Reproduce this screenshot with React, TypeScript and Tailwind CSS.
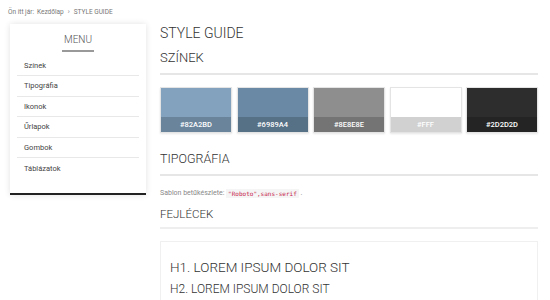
import React from "react";

const swatches = [
  { c: "#82A2BD", t: "#82A2BD" },
  { c: "#6989A4", t: "#6989A4" },
  { c: "#8E8E8E", t: "#8E8E8E" },
  { c: "#FFFFFF", t: "#FFF" },
  { c: "#2D2D2D", t: "#2D2D2D" },
];

const menu = ["Színek", "Tipográfia", "Ikonok", "Űrlapok", "Gombok", "Táblázatok"];

export default function App() {
  return (
    <div className="w-[550px] h-[300px] overflow-hidden bg-white text-[#555] font-['Roboto',sans-serif]">
      <div className="pl-[8px] pt-[8px] h-[24px] text-[6.5px] text-[#777] flex gap-[3px]">
        <span>Ön itt jár:</span>
        <span>Kezdőlap</span>
        <span className="px-[1px]">›</span>
        <span>STYLE GUIDE</span>
      </div>
      <div className="flex pl-[10px] gap-[14px]">
        <div className="w-[136px] shrink-0 self-start bg-white shadow-[0_0_6px_rgba(0,0,0,0.12)] border-b-2 border-[#222]">
          <div className="flex flex-col items-center pt-[10px]">
            <div className="text-[10px] text-[#555] leading-[12px] font-light">MENU</div>
            <div className="w-[32px] h-[2px] bg-[#999] mt-[4px]"></div>
          </div>
          <div className="px-[7px] pt-[4px] pb-[15px]">
            {menu.map((m, i) => (
              <div
                key={m}
                className={`h-[20.4px] flex items-center pl-[7px] text-[7.5px] text-[#444] ${i < menu.length - 1 ? "border-b border-[#e8e8e8]" : ""}`}
              >
                {m}
              </div>
            ))}
          </div>
        </div>
        <div className="w-[378px] shrink-0">
          <div className="text-[14px] leading-[18px] text-[#333] font-light">STYLE GUIDE</div>
          <div className="text-[13px] leading-[16px] mt-[8px] text-[#333] font-light">SZÍNEK</div>
          <div className="h-[2px] bg-[#e6e6e6] mt-[7px]"></div>
          <div className="flex gap-[4.5px] mt-[12px]">
            {swatches.map((s) => (
              <div
                key={s.t}
                className="w-[72px] h-[46px] flex flex-col border border-[#e4e4e4] shadow-[0_1px_2px_rgba(0,0,0,0.1)]"
                style={{ backgroundColor: s.c }}
              >
                <div className="flex-1"></div>
                <div className="h-[15px] bg-[rgba(0,0,0,0.18)] flex items-center justify-center text-[7.5px] text-white font-medium">
                  {s.t}
                </div>
              </div>
            ))}
          </div>
          <div className="text-[12.5px] leading-[16px] mt-[18px] text-[#333] font-light">TIPOGRÁFIA</div>
          <div className="h-[2px] bg-[#e6e6e6] mt-[7px]"></div>
          <div className="text-[7px] text-[#888] mt-[12px] flex items-center">
            <span>Sablon betűkészlete:&nbsp;</span>
            <span className="bg-[#f5f5f5] text-[#c7254e] px-[2px] font-['DejaVu_Sans_Mono',monospace] text-[6px]">"Roboto",sans-serif</span>
            <span>&nbsp;.</span>
          </div>
          <div className="text-[11.5px] leading-[14px] mt-[8px] text-[#333] font-light">FEJLÉCEK</div>
          <div className="h-[2px] bg-[#eee] mt-[6px]"></div>
          <div className="mt-[12px] border border-[#f0f0f0] h-[80px] px-[9px] pt-[17px]">
            <div className="text-[13.5px] leading-[17px] text-[#333] font-light">H1. LOREM IPSUM DOLOR SIT</div>
            <div className="text-[12px] leading-[14px] mt-[6px] text-[#333] font-light">H2. LOREM IPSUM DOLOR SIT</div>
          </div>
        </div>
      </div>
    </div>
  );
}
